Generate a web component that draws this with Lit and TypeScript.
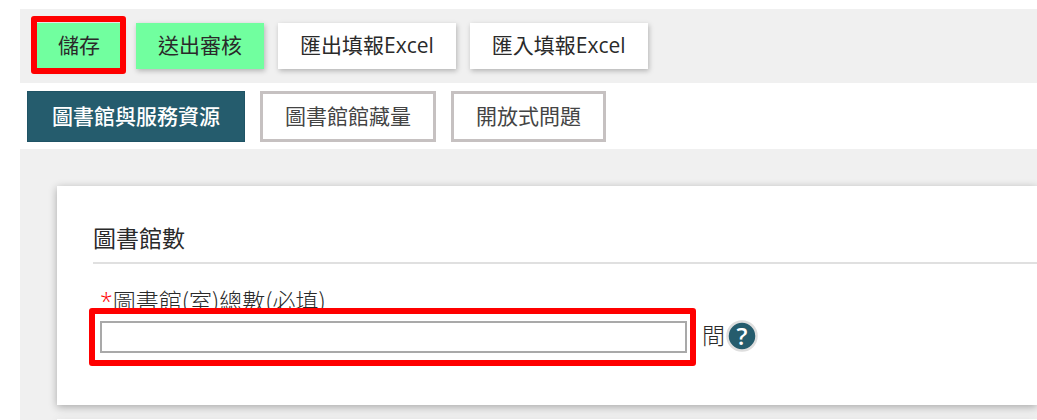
import { LitElement, html, css } from "lit";
import { customElement, state } from "lit/decorators.js";

@customElement("app-root")
export class AppRoot extends LitElement {
  static styles = css`
    :host {
      display: flex;
      flex-direction: column;
      min-height: 100vh;
      box-sizing: border-box;
      padding: 9px 0 0 20px;
      overflow: hidden;
      background: #fff;
      color: #2a2a2a;
      font-family: "Noto Sans CJK TC", sans-serif;
      font-size: 21px;
      line-height: 30px;
    }
    * {
      box-sizing: border-box;
    }
    button,
    input {
      font: inherit;
      color: inherit;
      margin: 0;
      border-radius: 0;
    }
    button {
      cursor: pointer;
      white-space: nowrap;
    }
    .toolbar {
      display: flex;
      gap: 14px;
      padding: 14px 16px;
      background: #f0f0f0;
      font-family: "Open Sans", "Noto Sans CJK TC", sans-serif;
    }
    .action {
      height: 46px;
      padding: 0 22px 2px;
      border: 0;
      background: #fff;
      box-shadow: 1px 2px 5px rgba(0, 0, 0, 0.25);
    }
    .primary {
      background: #71ff9f;
    }
    .marked {
      position: relative;
      display: flex;
    }
    .marked::after {
      content: "";
      position: absolute;
      inset: -7px -4px -5px -5px;
      border: 6px solid #f00;
      border-radius: 3px;
      pointer-events: none;
    }
    .tabs {
      display: flex;
      gap: 15px;
      padding: 8px 7px 7px;
    }
    .tab {
      height: 51px;
      padding: 0 22px 4px;
      border: 3px solid #c6c1c1;
      background: #fff;
      color: #444;
    }
    .tab[aria-selected="true"] {
      border: 1px solid #1f5365;
      padding: 0 24px 4px;
      background: #255c6d;
      color: #fff;
      font-weight: 500;
    }
    .content {
      flex: 1;
      display: flex;
      flex-direction: column;
      gap: 14px;
      padding: 37px 0 0 37px;
      background: #f0f0f0;
    }
    .card {
      padding: 34px 0 51px 36px;
      background: #fff;
      box-shadow: 0 2px 8px rgba(0, 0, 0, 0.3);
      font-size: 23px;
      line-height: 34px;
    }
    .next {
      flex: 1;
      padding: 0;
    }
    .title {
      margin: 0;
      padding-bottom: 8px;
      border-bottom: 2px solid #e0e0e0;
      font-size: 23px;
      font-weight: 400;
    }
    .field {
      padding: 19px 7px 0;
      font-weight: 300;
    }
    .label {
      display: block;
    }
    .required {
      color: #f00;
      font-family: "Open Sans", sans-serif;
    }
    .row {
      display: flex;
      align-items: center;
      padding-top: 2px;
    }
    .entry {
      flex: 0 1 587px;
      margin-right: 15px;
    }
    .entry::after {
      inset: -13px -9px -13px -11px;
    }
    .input {
      width: 100%;
      height: 32px;
      padding: 0 8px;
      border: 2px solid #a9a9a9;
      background: #fff;
      outline: 0;
    }
    .unit {
      padding-bottom: 6px;
      line-height: 26px;
    }
    .help {
      display: flex;
      flex: none;
      margin-left: 1px;
      padding: 0 0 2px;
      border: 0;
      background: none;
    }
    .mark {
      font: 600 24px "Open Sans", sans-serif;
      fill: #fff;
    }
  `;

  @state() private selected = 0;

  private tabs = ["圖書館與服務資源", "圖書館館藏量", "開放式問題"];

  render() {
    return html`
      <div class="toolbar">
        <div class="marked"><button class="action primary">儲存</button></div>
        <button class="action primary">送出審核</button>
        <button class="action">匯出填報Excel</button>
        <button class="action">匯入填報Excel</button>
      </div>
      <div class="tabs" role="tablist">
        ${this.tabs.map(
          (name, i) => html`<button
            class="tab"
            role="tab"
            aria-selected=${i === this.selected ? "true" : "false"}
            @click=${() => (this.selected = i)}
          >${name}</button>`
        )}
      </div>
      <main class="content">
        <section class="card">
          <h2 class="title">圖書館數</h2>
          <div class="field">
            <label class="label" for="total"><span class="required">*</span>圖書館(室)總數(必填)</label>
            <div class="row">
              <div class="marked entry"><input class="input" id="total" type="text" required /></div>
              <span class="unit">間</span>
              <button class="help" aria-label="說明">
                <svg width="32" height="32" viewBox="0 0 32 32">
                  <circle cx="16" cy="16" r="14.5" fill="#255c6d" stroke="#dedede" stroke-width="2.5" />
                  <text class="mark" x="16" y="25" text-anchor="middle">?</text>
                </svg>
              </button>
            </div>
          </div>
        </section>
        <section class="card next"></section>
      </main>
    `;
  }
}
